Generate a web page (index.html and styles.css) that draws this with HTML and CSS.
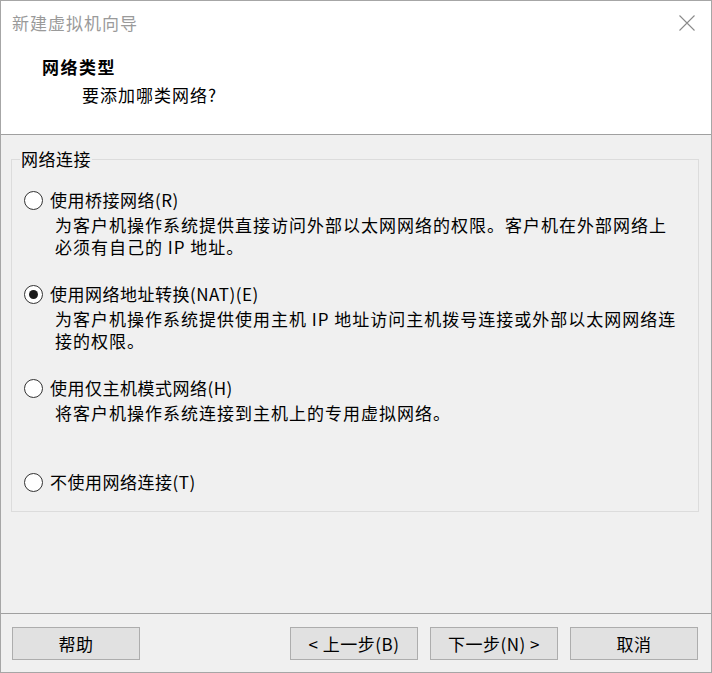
FILE: index.html
```html
<!DOCTYPE html>
<html lang="zh-CN">
<head>
<meta charset="utf-8">
<title>新建虚拟机向导</title>
<link rel="stylesheet" href="styles.css">
</head>
<body>
<div class="window">
  <header class="header">
    <div class="title-row">
      <span class="title">新建虚拟机向导</span>
      <svg class="close" width="16" height="16" viewBox="0 0 16 16"><path d="M0.5 0.5 L15.5 15.5 M15.5 0.5 L0.5 15.5" stroke="#8a8a8a" stroke-width="1.1" fill="none"/></svg>
    </div>
    <div class="heading">网络类型</div>
    <div class="subheading">要添加哪类网络?</div>
  </header>
  <main class="body">
    <fieldset class="group">
      <legend class="legend">网络连接</legend>
      <div class="option">
        <div class="opt-row"><span class="radio"></span><span class="label">使用桥接网络(R)</span></div>
        <div class="desc">为客户机操作系统提供直接访问外部以太网网络的权限。客户机在外部网络上<br>必须有自己的 IP 地址。</div>
      </div>
      <div class="option">
        <div class="opt-row"><span class="radio checked"></span><span class="label">使用网络地址转换(NAT)(E)</span></div>
        <div class="desc">为客户机操作系统提供使用主机 IP 地址访问主机拨号连接或外部以太网网络连<br>接的权限。</div>
      </div>
      <div class="option">
        <div class="opt-row"><span class="radio"></span><span class="label">使用仅主机模式网络(H)</span></div>
        <div class="desc">将客户机操作系统连接到主机上的专用虚拟网络。</div>
      </div>
      <div class="option last">
        <div class="opt-row"><span class="radio"></span><span class="label">不使用网络连接(T)</span></div>
      </div>
    </fieldset>
  </main>
  <footer class="footer">
    <button class="btn">帮助</button>
    <div class="spacer"></div>
    <button class="btn">&lt; 上一步(B)</button>
    <button class="btn">下一步(N) &gt;</button>
    <button class="btn">取消</button>
  </footer>
</div>
</body>
</html>
```
FILE: styles.css
```css
* { box-sizing: border-box; }
html, body { margin: 0; padding: 0; }
body {
  font-family: "Noto Sans CJK SC", "Noto Sans", sans-serif;
  color: #000;
  background: #f0f0f0;
}
.window {
  width: 712px;
  height: 673px;
  border: 1px solid #a6a6a6;
  display: flex;
  flex-direction: column;
  background: #f0f0f0;
}
.header {
  height: 134px;
  background: #fff;
  border-bottom: 1px solid #a0a0a0;
  padding: 10px 16px 0 11px;
}
.title-row {
  display: flex;
  justify-content: space-between;
  align-items: center;
  height: 24px;
}
.title {
  font-size: 17px;
  letter-spacing: 1px;
  line-height: 24px;
  color: #9a9a9a;
}
.close { display: block; margin-top: 0; }
.heading {
  margin: 20px 0 0 30px;
  font-size: 17px;
  font-weight: bold;
  letter-spacing: 1.5px;
  line-height: 24px;
}
.subheading {
  margin: 4px 0 0 70px;
  font-size: 17px;
  letter-spacing: 1px;
  line-height: 24px;
}
.body {
  flex: 1;
  padding: 14px 12px 0 10px;
}
.group {
  margin: 0;
  border: 1px solid #dcdcdc;
  padding: 20px 12px 18px 12px;
  min-width: 0;
}
.legend {
  font-size: 17px;
  letter-spacing: 0.5px;
  line-height: 20px;
  padding: 0 1px;
  margin-left: -4px;
}
.option { margin-bottom: 25px; }
.option.last { margin-bottom: 0; }
.option:nth-child(4) { margin-bottom: 47px; }
.opt-row {
  display: flex;
  align-items: center;
  gap: 7px;
  height: 22px;
}
.radio {
  width: 19px;
  height: 19px;
  border: 1px solid #333;
  border-radius: 50%;
  background: #fff;
  display: flex;
  align-items: center;
  justify-content: center;
  flex: none;
}
.radio.checked::after {
  content: "";
  width: 9px;
  height: 9px;
  border-radius: 50%;
  background: #1a1a1a;
}
.label {
  font-size: 17px;
  letter-spacing: 0.5px;
  line-height: 22px;
}
.desc {
  margin-top: 3px;
  padding-left: 31px;
  font-size: 17px;
  letter-spacing: 1px;
  line-height: 22px;
  white-space: nowrap;
}
.footer {
  border-top: 1px solid #a0a0a0;
  padding: 13px 13px 12px 11px;
  display: flex;
  gap: 12px;
}
.spacer { flex: 1; }
.btn {
  width: 128px;
  height: 33px;
  background: #e1e1e1;
  border: 1px solid #adadad;
  font-family: "Noto Sans CJK SC", "Noto Sans", sans-serif;
  font-size: 17px;
  letter-spacing: 0.5px;
  color: #000;
  padding: 0;
  line-height: 31px;
}
```
